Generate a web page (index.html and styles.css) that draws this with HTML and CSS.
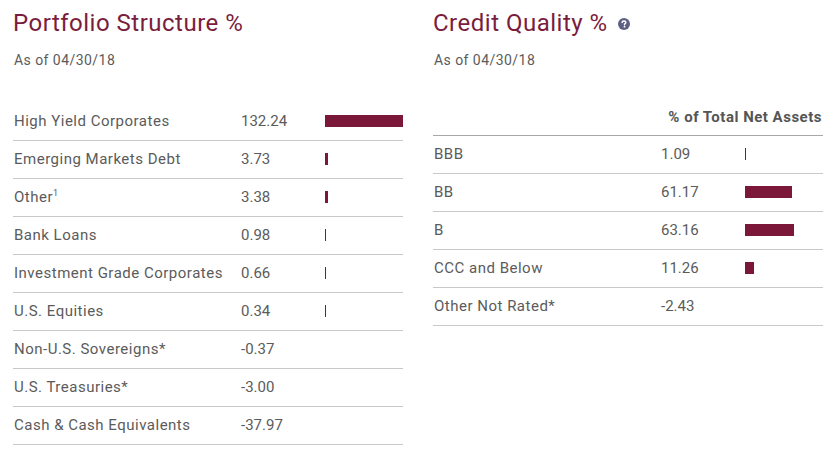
FILE: index.html
```html
<!DOCTYPE html>
<html>
<head>
<meta charset="utf-8">
<link rel="stylesheet" href="styles.css">
</head>
<body>
<div class="page">
  <section class="panel">
    <h2 class="title">Portfolio Structure %</h2>
    <div class="asof">As of 04/30/18</div>
    <div class="table left-table">
      <div class="row"><span class="label">High Yield Corporates</span><span class="val">132.24</span><span class="barcell"><span class="bar" style="width:78px"></span></span></div>
      <div class="row"><span class="label">Emerging Markets Debt</span><span class="val">3.73</span><span class="barcell"><span class="bar" style="width:3px"></span></span></div>
      <div class="row"><span class="label">Other<sup>1</sup></span><span class="val">3.38</span><span class="barcell"><span class="bar" style="width:3px"></span></span></div>
      <div class="row"><span class="label">Bank Loans</span><span class="val">0.98</span><span class="barcell"><span class="bar" style="width:1px"></span></span></div>
      <div class="row"><span class="label">Investment Grade Corporates</span><span class="val">0.66</span><span class="barcell"><span class="bar" style="width:1px"></span></span></div>
      <div class="row"><span class="label">U.S. Equities</span><span class="val">0.34</span><span class="barcell"><span class="bar" style="width:1px"></span></span></div>
      <div class="row"><span class="label">Non-U.S. Sovereigns*</span><span class="val">-0.37</span><span class="barcell"></span></div>
      <div class="row"><span class="label">U.S. Treasuries*</span><span class="val">-3.00</span><span class="barcell"></span></div>
      <div class="row"><span class="label">Cash &amp; Cash Equivalents</span><span class="val">-37.97</span><span class="barcell"></span></div>
    </div>
  </section>
  <section class="panel">
    <h2 class="title">Credit Quality % <span class="help"><svg width="12" height="12" viewBox="0 0 12 12"><circle cx="6" cy="6" r="6" fill="#5f5f86"/><path d="M4.2 4.6 C4.2 3.5 5 2.9 6 2.9 C7.1 2.9 7.8 3.5 7.8 4.4 C7.8 5.5 6.5 5.6 6.5 6.7" fill="none" stroke="#fff" stroke-width="1.5" stroke-linecap="round"/><circle cx="6.5" cy="8.7" r="0.9" fill="#fff"/></svg></span></h2>
    <div class="asof">As of 04/30/18</div>
    <div class="table right-table">
      <div class="head">% of Total Net Assets</div>
      <div class="row"><span class="label">BBB</span><span class="val">1.09</span><span class="barcell"><span class="bar" style="width:1px"></span></span></div>
      <div class="row"><span class="label">BB</span><span class="val">61.17</span><span class="barcell"><span class="bar" style="width:47px"></span></span></div>
      <div class="row"><span class="label">B</span><span class="val">63.16</span><span class="barcell"><span class="bar" style="width:49px"></span></span></div>
      <div class="row"><span class="label">CCC and Below</span><span class="val">11.26</span><span class="barcell"><span class="bar" style="width:9px"></span></span></div>
      <div class="row"><span class="label">Other Not Rated*</span><span class="val">-2.43</span><span class="barcell"></span></div>
    </div>
  </section>
</div>
</body>
</html>
```

FILE: styles.css
```css
html, body {
  margin: 0;
  padding: 0;
  background: #fff;
}
body {
  font-family: Roboto, "Liberation Sans", sans-serif;
  color: #5b5b5b;
}
.page {
  display: flex;
  gap: 30px;
  padding: 0 0 0 13px;
}
.panel {
  width: 390px;
}
.title {
  margin: 0;
  padding-top: 8px;
  font-size: 24px;
  line-height: 30px;
  font-weight: 400;
  letter-spacing: 0.5px;
  color: #7a1d3c;
  display: flex;
  align-items: center;
}
.help {
  display: inline-flex;
  margin-left: 10px;
  margin-top: 2px;
}
.asof {
  margin-top: 13px;
  font-size: 14px;
  line-height: 18px;
  letter-spacing: 0.45px;
  padding-left: 1px;
}
.left-table {
  margin-top: 34px;
}
.right-table {
  margin-top: 30px;
}
.head {
  height: 36px;
  line-height: 36px;
  text-align: right;
  font-weight: 700;
  font-size: 15px;
  letter-spacing: 0.5px;
  color: #555;
  border-bottom: 1px solid #a8a8a8;
  padding-right: 1px;
}
.row {
  display: grid;
  grid-template-columns: 228px 84px 1fr;
  box-sizing: border-box;
  height: 38px;
  padding-bottom: 1px;
  align-items: center;
  border-bottom: 1px solid #c8c8c8;
  font-size: 15px;
}
.label {
  padding-left: 1px;
  letter-spacing: 0.5px;
}
.barcell {
  display: flex;
  align-items: center;
  height: 12px;
}
.bar {
  display: block;
  height: 12px;
  background: #7b1839;
}
sup {
  font-size: 9px;
  line-height: 0;
  vertical-align: 6px;
}
```
